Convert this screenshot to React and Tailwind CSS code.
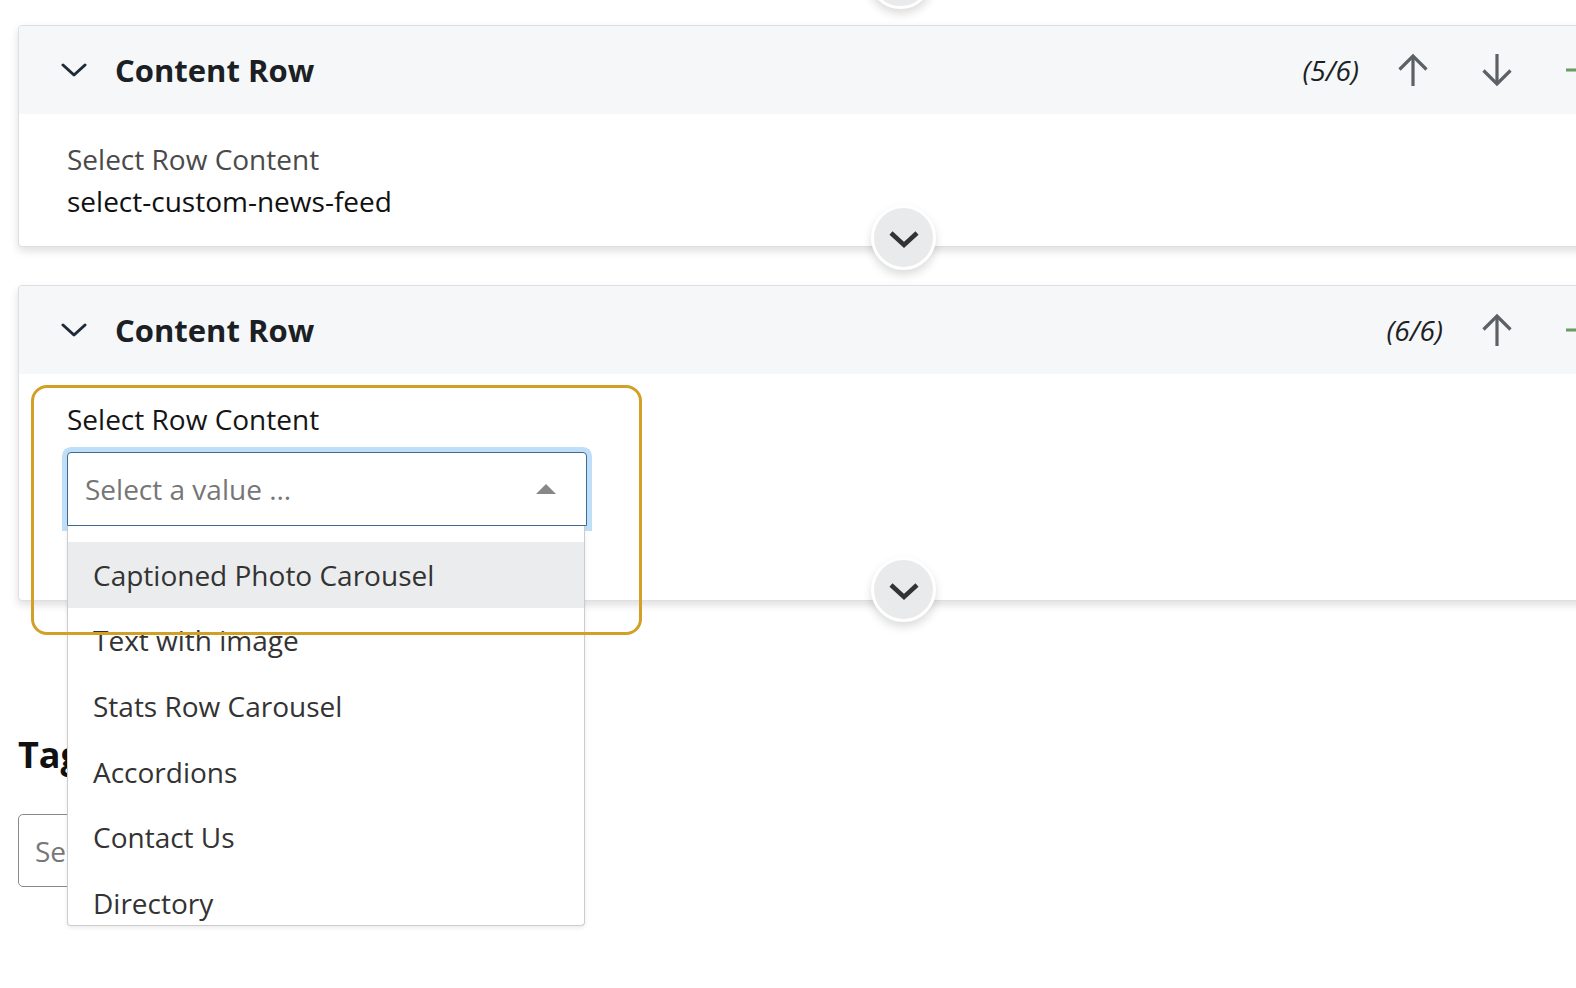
import React from "react";

const font = { fontFamily: '"Open Sans", "Noto Sans", sans-serif' };

const ChevronDown = ({ className }) => (
    <svg viewBox="0 0 26 14" className={className} fill="none" stroke="currentColor" strokeWidth="3" strokeLinecap="round" strokeLinejoin="round">
        <path d="M2 2 L13 12 L24 2" />
    </svg>
);

const ArrowUp = () => (
    <svg viewBox="0 0 32 34" className="w-[32px] h-[34px] text-[#5c6166]" fill="none" stroke="currentColor" strokeWidth="3.2" strokeLinejoin="miter">
        <path d="M16 33 V3" />
        <path d="M2.5 16.5 L16 3 L29.5 16.5" />
    </svg>
);

const ArrowDown = () => (
    <svg viewBox="0 0 32 34" className="w-[32px] h-[34px] text-[#5c6166]" fill="none" stroke="currentColor" strokeWidth="3.2" strokeLinejoin="miter">
        <path d="M16 1 V31" />
        <path d="M2.5 17.5 L16 31 L29.5 17.5" />
    </svg>
);

const Plus = () => (
    <svg viewBox="0 0 32 32" className="w-[32px] h-[32px] text-[#6a9c63]" fill="none" stroke="currentColor" strokeWidth="3">
        <path d="M0 16 H32 M16 0 V32" />
    </svg>
);

const ExpandButton = ({ className }) => (
    <div className={`absolute w-[65px] h-[65px] rounded-full bg-[#e9eaec] border-[3px] border-white shadow-[0_5px_10px_rgba(0,0,0,0.14)] flex items-center justify-center ${className}`}>
        <svg viewBox="0 0 32 20" className="w-[32px] h-[20px] mt-[3px] text-[#333333]" fill="none" stroke="currentColor" strokeWidth="4.5">
            <path d="M3 4 L16 16 L29 4" />
        </svg>
    </div>
);

const CardHeader = ({ counter, showDown }) => (
    <div className="h-[88px] bg-[#f6f7f9] flex items-center pl-[42px] pr-[39px] rounded-t-[4px]">
        <ChevronDown className="w-[26px] h-[14px] text-[#1f2a37]" />
        <h2 className="ml-[28px] text-[31px] font-bold text-[#1c1f24] leading-none">Content Row</h2>
        <div className="ml-auto flex items-center">
            <span className="italic text-[28px] text-[#1c1f24] mr-[12px]">{counter}</span>
            <div className="w-[84px] flex justify-center">
                <ArrowUp />
            </div>
            {showDown && (
                <div className="w-[84px] flex justify-center">
                    <ArrowDown />
                </div>
            )}
            <div className="ml-[27px] flex">
                <Plus />
            </div>
        </div>
    </div>
);

const options = [
    "Captioned Photo Carousel",
    "Text with image",
    "Stats Row Carousel",
    "Accordions",
    "Contact Us",
    "Directory",
];

export default function App() {
    return (
        <div className="relative w-[1576px] h-[988px] overflow-hidden bg-white" style={font}>
            <ExpandButton className="left-[868px] -top-[56px]" />

            <div className="pl-[18px] pt-[25px]">
                {/* card 5 */}
                <div className="relative w-[1620px] border border-[#dcdfe3] rounded-[4px] bg-white shadow-[0_4px_8px_rgba(0,0,0,0.13)]">
                    <CardHeader counter="(5/6)" showDown />
                    <div className="pl-[48px] pt-[25px] pb-[23px]">
                        <p className="text-[28px] leading-[40px] text-[#4a4a4a]">Select Row Content</p>
                        <p className="text-[28px] leading-[44px] text-[#111111]">select-custom-news-feed</p>
                    </div>
                    <ExpandButton className="left-[852px] -bottom-[24px]" />
                </div>

                {/* card 6 */}
                <div className="relative mt-[38px] w-[1620px] border border-[#dcdfe3] rounded-[4px] bg-white shadow-[0_4px_8px_rgba(0,0,0,0.13)]">
                    <CardHeader counter="(6/6)" />
                    <div className="pl-[48px] pt-[25px] pb-[74px]">
                        <p className="text-[28px] leading-[40px] text-[#151515]">Select Row Content</p>
                        <div className="relative z-20 mt-[13px] w-[520px]">
                            <div className="h-[74px] flex items-center justify-between pl-[17px] pr-[30px] border border-[#3f6a90] rounded-t-[4px] bg-white shadow-[0_0_0_5px_#bfdff9]">
                                <span className="text-[28px] text-[#767676]">Select a value ...</span>
                                <span className="w-0 h-0 border-l-[10px] border-r-[10px] border-b-[10px] border-l-transparent border-r-transparent border-b-[#888888]" />
                            </div>
                            <div className="absolute left-0 top-full w-[518px] h-[400px] overflow-hidden bg-white border border-t-0 border-[#cccccc] rounded-b-[4px] pt-[16px] shadow-[0_2px_4px_rgba(0,0,0,0.08)]">
                                {options.map((opt, i) => (
                                    <div
                                        key={opt}
                                        className={`h-[65.6px] flex items-center pl-[25px] text-[28px] text-[#333333] ${i === 0 ? "bg-[#ebecee]" : ""}`}
                                    >
                                        {opt}
                                    </div>
                                ))}
                            </div>
                        </div>
                    </div>
                    <ExpandButton className="left-[852px] -bottom-[22px]" />
                </div>

                {/* tags */}
                <h3 className="mt-[132px] text-[36px] font-bold text-[#111111] leading-[44px]">Tag</h3>
                <div className="mt-[37px] w-[500px] h-[73px] border border-[#8a8a8a] rounded-[5px] flex items-center pl-[16px]">
                    <span className="text-[28px] text-[#777777]">Se</span>
                </div>
            </div>

            {/* annotation */}
            <div className="absolute left-[31px] top-[385px] w-[611px] h-[250px] border-[3px] border-[#d29f27] rounded-[16px] pointer-events-none z-30" />
        </div>
    );
}
